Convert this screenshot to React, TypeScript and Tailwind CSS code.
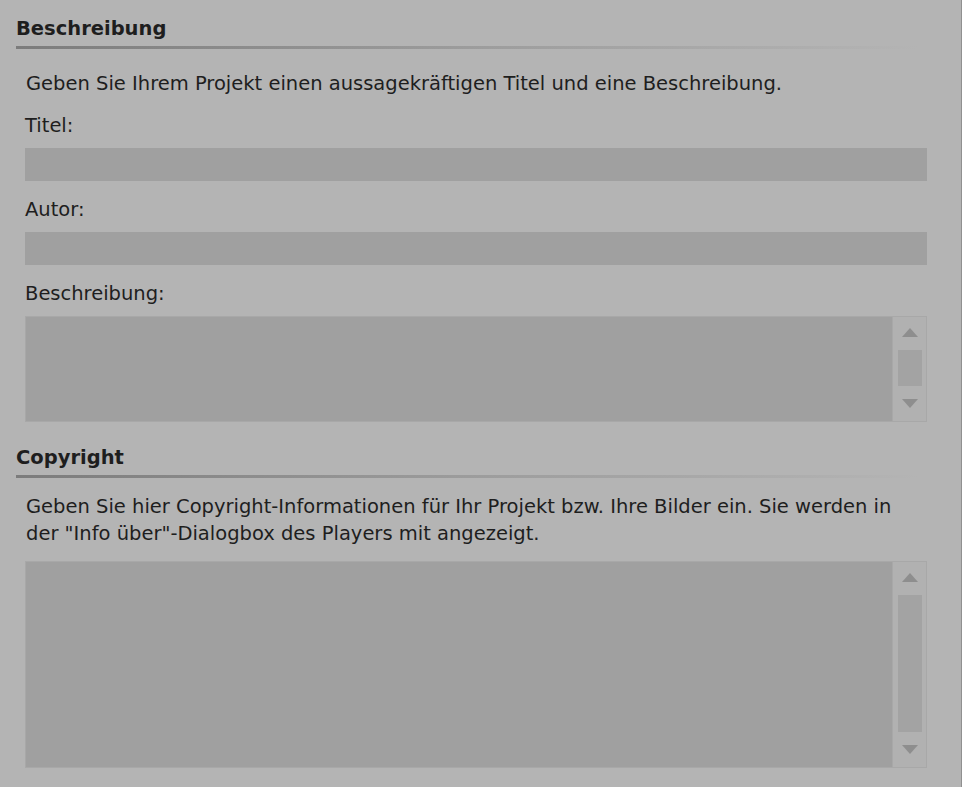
import React from "react";

const font = { fontFamily: '"DejaVu Sans", Verdana, sans-serif' };

function Header({ title }: { title: string }) {
  return (
    <div className="pl-4 pr-[42px]">
      <div className="text-[19.5px] font-bold leading-[24px] text-[#1e1e1e]">{title}</div>
      <div className="h-[3px] mt-[5px] bg-gradient-to-r from-[#7c7c7c] via-[#9c9c9c] to-[#b4b4b4]" />
    </div>
  );
}

function ScrollBar({ thumbH }: { thumbH: number }) {
  return (
    <div className="w-[34px] h-full bg-[#b1b1b1] border-l border-[#a8a8a8] flex flex-col items-center pt-[11px] pb-[13px]">
      <div className="w-0 h-0 border-l-[8px] border-r-[8px] border-b-[9px] border-l-transparent border-r-transparent border-b-[#8e8e8e]" />
      <div className="w-[24px] bg-[#a3a3a3] mt-[13px]" style={{ height: thumbH }} />
      <div className="flex-1" />
      <div className="w-0 h-0 border-l-[8px] border-r-[8px] border-t-[9px] border-l-transparent border-r-transparent border-t-[#8e8e8e]" />
    </div>
  );
}

function TextArea({ h, thumbH }: { h: number; thumbH: number }) {
  return (
    <div className="ml-[25px] mr-[34px] flex border border-[#a8a8a8]" style={{ height: h }}>
      <div className="flex-1 bg-[#a0a0a0]" />
      <ScrollBar thumbH={thumbH} />
    </div>
  );
}

const label = "pl-[25px] text-[19.5px] leading-[27px]";
const input = "ml-[25px] mr-[34px] h-[33px] bg-[#a0a0a0] mt-[9px]";

export default function App() {
  return (
    <div
      className="w-[962px] h-[787px] bg-[#b4b4b4] border-r border-[#909090] overflow-hidden text-[#1e1e1e] pt-[17px]"
      style={font}
    >
      <Header title="Beschreibung" />
      <div className="pl-[26px] pr-[40px] text-[19.5px] leading-[27px] mt-[21px]">
        Geben Sie Ihrem Projekt einen aussagekräftigen Titel und eine Beschreibung.
      </div>
      <div className={`${label} mt-[15px]`}>Titel:</div>
      <div className={input} />
      <div className={`${label} mt-[15px]`}>Autor:</div>
      <div className={input} />
      <div className={`${label} mt-[15px]`}>Beschreibung:</div>
      <div className="mt-[9px]">
        <TextArea h={106} thumbH={36} />
      </div>
      <div className="mt-[24px]">
        <Header title="Copyright" />
      </div>
      <div className="pl-[26px] pr-[46px] text-[19.5px] leading-[27px] mt-[15px]">
        Geben Sie hier Copyright-Informationen für Ihr Projekt bzw. Ihre Bilder ein. Sie werden in der "Info über"-Dialogbox des Players mit angezeigt.
      </div>
      <div className="mt-[14px]">
        <TextArea h={207} thumbH={137} />
      </div>
    </div>
  );
}
